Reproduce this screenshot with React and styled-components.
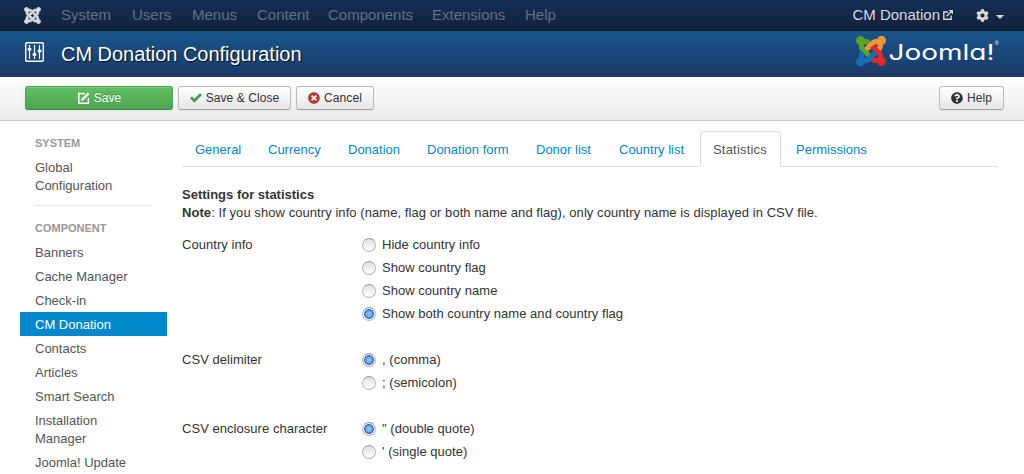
import React, { useState } from "react";
import styled, { createGlobalStyle, css } from "styled-components";
import { FaCog, FaQuestionCircle, FaTimesCircle } from "react-icons/fa";

const GlobalStyle = createGlobalStyle`
  * { box-sizing: border-box; }
  body {
    margin: 0;
    background: #fff;
    color: #333;
    font: 13px/18px "Liberation Sans", Arial, sans-serif;
    overflow: hidden;
  }
  button { font-family: inherit; }
`;

const Page = styled.div`
  height: 474px;
  overflow: hidden;
`;

const NavBar = styled.nav`
  display: flex;
  align-items: center;
  height: 31px;
  padding: 0 20px 0 24px;
  background: linear-gradient(#152e56, #10223e);
  border-bottom: 1px solid #0d1a2c;
  font-size: 15px;
`;

const NavMark = styled.div`
  display: flex;
  width: 37px;
  color: #d9d9d9;
`;

const NavItem = styled.a`
  width: ${(p) => p.$width}px;
  color: #626f84;
  white-space: nowrap;
`;

const NavEnd = styled.div`
  display: flex;
  align-items: center;
  margin-left: auto;
  color: #d9d9d9;
`;

const SiteLink = styled.a`
  display: flex;
  align-items: center;
  gap: 3px;
  margin-right: 23px;
`;

const Caret = styled.span`
  margin: 3px 0 0 7px;
  border: 4px solid transparent;
  border-top-color: #d9d9d9;
  border-bottom: 0;
`;

const Header = styled.header`
  display: flex;
  align-items: center;
  height: 46px;
  padding: 0 20px 0 25px;
  background: linear-gradient(#17568c, #1a3867);
  color: #fff;
`;

const Title = styled.h1`
  margin: 0 auto 0 17px;
  font-size: 20px;
  font-weight: normal;
  line-height: 46px;
  letter-spacing: -0.03px;
  text-shadow: 1px 1px 1px rgba(0, 0, 0, 0.8);
`;

const Toolbar = styled.div`
  display: flex;
  gap: 5px;
  height: 44px;
  padding: 9px 20px 0 25px;
  background: linear-gradient(#fff, #ebebeb);
  border-bottom: 1px solid #ccc;
`;

const Button = styled.button`
  display: flex;
  align-items: center;
  justify-content: center;
  gap: 4px;
  width: ${(p) => p.$width}px;
  height: 24px;
  padding: 0;
  border: 1px solid #bbb;
  border-bottom-color: #a2a2a2;
  border-radius: 3px;
  background: linear-gradient(#fff, #e6e6e6);
  box-shadow: inset 0 1px 0 rgba(255, 255, 255, 0.2), 0 1px 2px rgba(0, 0, 0, 0.05);
  color: #333;
  font-size: 12px;
  letter-spacing: 0.08px;
  ${(p) =>
    p.$primary &&
    css`
      padding-left: 1px;
      border-color: #4da24d;
      border-bottom-color: #3c873c;
      background: linear-gradient(#5fc061, #4fa350);
      color: #fff;
      text-shadow: 0 -1px 0 rgba(0, 0, 0, 0.25);
    `}
  ${(p) => p.$end && "margin-left: auto;"}
`;

const Body = styled.div`
  display: flex;
  padding: 10px 26px 0 20px;
`;

const Sidebar = styled.aside`
  width: 147px;
  margin-right: 15px;
`;

const SideHeading = styled.div`
  padding: 3px 15px;
  color: #999;
  font-size: 11px;
  font-weight: bold;
  text-transform: uppercase;
`;

const SideItem = styled.a`
  display: block;
  padding: 4px 15px 2px;
  color: ${(p) => (p.$active ? "#fff" : "#555")};
  background: ${(p) => (p.$active ? "#08c" : "transparent")};
`;

const SideRule = styled.div`
  height: 1px;
  margin: 8px 15px 10px;
  background: #e5e5e5;
`;

const Main = styled.main`
  flex: 1;
`;

const Tabs = styled.div`
  display: flex;
  height: 36px;
  gap: 2px;
  border-bottom: 1px solid #ddd;
`;

const Tab = styled.button`
  width: ${(p) => p.$width}px;
  height: 36px;
  padding: 0 0 0 12px;
  border: 1px solid transparent;
  border-radius: 4px 4px 0 0;
  background: none;
  color: #08c;
  font-size: 13px;
  text-align: left;
  white-space: nowrap;
  ${(p) =>
    p.$active &&
    css`
      border-color: #ddd;
      border-bottom-color: #fff;
      background: #fff;
      color: #555;
      letter-spacing: 0.2px;
    `}
`;

const Intro = styled.p`
  margin: 19px 0 11px;
  white-space: nowrap;
`;

const Note = styled.span`
  letter-spacing: 0.065px;
`;

const Group = styled.div`
  display: flex;
  margin-bottom: 23px;
`;

const GroupLabel = styled.div`
  width: 180px;
  line-height: 23px;
  letter-spacing: 0.04px;
`;

const Option = styled.label`
  display: flex;
  align-items: center;
  gap: 6px;
  height: 23px;
  letter-spacing: 0.03px;
`;

const Radio = styled.input`
  appearance: none;
  flex: none;
  width: 14px;
  height: 14px;
  margin: 0;
  border: 1px solid #b8bbb5;
  border-top-color: #989b95;
  border-radius: 50%;
  background: linear-gradient(#e0e2de, #fbfbfa 80%);
  &:checked {
    background: radial-gradient(circle at 50% 50%, #9bcafc 0, #65a7f4 3.2px, #2c66ba 4.2px, #2c66ba 4.5px, #eef0ec 5.2px);
  }
`;

const ARMS = [
  ["#5aa426", "M.6 92.1C.6 58.8 27.4 32 60.4 32c30 0 54.5 21.9 59.2 50.2 32.6-7.6 67.1.6 96.5 30l-44.3 44.3c-20.5-20.5-42.6-16.3-55.4-3.5-14.3 14.3-14.3 37.9 0 52.2l99.5 99.5-44 44.3c-87.7-87.2-49.7-49.7-99.8-99.7-26.8-26.5-35-64.8-24.8-98.9C20.4 144.6.6 120.7.6 92.1z"],
  ["#f9943b", "M130.1 208.5l44.3 44.3c10-10 89.7-89.7 99.7-99.8 14.3-14.3 37.6-14.3 51.9 0 12.8 12.8 17 35-3.5 55.4l44 44.3c31.2-31.2 38.5-67.6 28.9-101.2 29.2-4.1 51.9-29.2 51.9-59.5 0-33.2-26.8-60.1-59.8-60.1-30.3 0-55.4 22.5-59.5 51.6-33.8-9.9-71.7-1.5-98.3 25.1-18.3 19.1-71.1 71.5-99.6 99.9z"],
  ["#e22a28", "M396.4 360.7c8.2-32.7-.9-68.5-26.3-93.9-11.8-12.2 5 4.7-99.5-99.7l-44.3 44.3 99.7 99.7c14.3 14.3 14.3 37.6 0 51.9-12.8 12.8-35 17-55.4-3.5l-44 44.3c27.6 30.2 68 38.8 102.7 28 5.5 27.4 29.7 48.1 58.9 48.1 33 0 59.8-26.8 59.8-60.1 0-30.2-22.5-55-51.6-59.1z"],
  ["#1570b5", "M312.1 307.6l-44-44.3c-87 86.4-50.4 50.4-99.7 99.8-14.3 14.3-37.6 14.3-51.9 0-13.1-13.4-16.9-35.3 3.2-55.4l-44-44.3c-30.2 30.2-38 65.2-29.5 98.3-26.7 6-46.2 29.9-46.2 58.2C0 453.2 26.8 480 59.8 480c28.6 0 52.5-19.8 58.6-46.7 32.7 8.2 68.5-.6 94.2-26 32.1-32 12.2-12.4 99.5-99.7z"],
];

const JoomlaMark = ({ size, mono }) => (
  <svg width={size} height={size} viewBox="-8 24 464 464">
    {ARMS.map(([color, d]) => {
      const paint = mono ? "currentColor" : color;
      return <path key={color} d={d} fill={paint} stroke={paint} strokeWidth={16} />;
    })}
  </svg>
);

const Brand = styled.div`
  display: flex;
  align-items: center;
  margin-top: -7px;
`;

const BrandText = styled.text`
  fill: #fff;
  font-family: Inter, "Liberation Sans", sans-serif;
  font-size: 22px;
  font-weight: 400;
  font-feature-settings: "cv11" 1;
`;

const Registered = styled.text`
  fill: #fff;
  font-family: "Liberation Sans", sans-serif;
  font-size: 6px;
`;

const Wordmark = () => (
  <svg width="118" height="40" viewBox="0 0 118 40">
    <BrandText x="2.5" y="29" textLength="106" lengthAdjust="spacingAndGlyphs">Joomla!</BrandText>
    <Registered x="108.5" y="14">®</Registered>
  </svg>
);

const SlidersIcon = () => (
  <svg width="19" height="20" viewBox="0 0 19 20" fill="none" stroke="#fff">
    <rect x="0.75" y="0.75" width="17.5" height="18.5" rx="1" strokeWidth="1.4" />
    <path d="M4.5 3v14M9.5 3v14M14.5 3v14" strokeWidth="1.2" />
    <path d="M2.7 7.2h3.6M7.7 12.5h3.6M12.7 9h3.6" strokeWidth="2.4" />
  </svg>
);

const SlidersHolder = styled.div`
  display: flex;
  margin-top: -4px;
`;

const EditIcon = () => (
  <svg width="12" height="12" viewBox="0 0 12 12" fill="none" stroke="#fff">
    <path d="M7 1.6H.8v9.6h9.6V6" strokeWidth="1.5" />
    <path d="M4.3 7.7L10.6 1.4" strokeWidth="2.4" />
    <path d="M3 9l.6-2.4L5.4 8.4z" fill="#fff" stroke="none" />
  </svg>
);

const CheckIcon = () => (
  <svg width="12" height="10" viewBox="0 0 12 10" fill="none" stroke="#3f9a45" strokeWidth="2.7">
    <path d="M1 4.4l3.3 3.4L11 1.1" />
  </svg>
);

const ExternalIcon = () => (
  <svg width="10" height="10" viewBox="0 0 10 10" fill="none" stroke="currentColor">
    <path d="M5 2H.8v7.3h7.4V5.5" strokeWidth="1.4" />
    <path d="M3.6 6.3L8.4 1.5" strokeWidth="1.5" />
    <path d="M5.6 0H10v4.3z" fill="currentColor" stroke="none" />
  </svg>
);

const MENU = [
  ["System", 71],
  ["Users", 60],
  ["Menus", 65],
  ["Content", 71],
  ["Components", 104],
  ["Extensions", 93],
  ["Help", 40],
];

const TABS = [
  ["General", 71],
  ["Currency", 78],
  ["Donation", 77],
  ["Donation form", 107],
  ["Donor list", 81],
  ["Country list", 92],
  ["Statistics", 81],
  ["Permissions", 98],
];

const COMPONENTS = [
  "Banners",
  "Cache Manager",
  "Check-in",
  "CM Donation",
  "Contacts",
  "Articles",
  "Smart Search",
  "Installation Manager",
  "Joomla! Update",
];

const FIELDS = [
  {
    label: "Country info",
    options: ["Hide country info", "Show country flag", "Show country name", "Show both country name and country flag"],
    value: 3,
  },
  { label: "CSV delimiter", options: [", (comma)", "; (semicolon)"], value: 0 },
  { label: "CSV enclosure character", options: ['" (double quote)', "' (single quote)"], value: 0 },
];

function RadioField({ label, options, value }) {
  const [selected, setSelected] = useState(value);
  return (
    <Group>
      <GroupLabel>{label}</GroupLabel>
      <div>
        {options.map((option, i) => (
          <Option key={option}>
            <Radio type="radio" name={label} checked={selected === i} onChange={() => setSelected(i)} />
            {option}
          </Option>
        ))}
      </div>
    </Group>
  );
}

export default function App() {
  const [tab, setTab] = useState("Statistics");
  return (
    <Page>
      <GlobalStyle />
      <NavBar>
        <NavMark>
          <JoomlaMark size={17} mono />
        </NavMark>
        {MENU.map(([name, width]) => (
          <NavItem key={name} $width={width}>
            {name}
          </NavItem>
        ))}
        <NavEnd>
          <SiteLink>
            CM Donation <ExternalIcon />
          </SiteLink>
          <FaCog size={13} />
          <Caret />
        </NavEnd>
      </NavBar>
      <Header>
        <SlidersHolder>
          <SlidersIcon />
        </SlidersHolder>
        <Title>CM Donation Configuration</Title>
        <Brand>
          <JoomlaMark size={30} />
          <Wordmark />
        </Brand>
      </Header>
      <Toolbar>
        <Button $primary $width={148}>
          <EditIcon /> Save
        </Button>
        <Button $width={113}>
          <CheckIcon /> Save &amp; Close
        </Button>
        <Button $width={78}>
          <FaTimesCircle size={12} color="#bd362f" /> Cancel
        </Button>
        <Button $width={65} $end>
          <FaQuestionCircle size={12} /> Help
        </Button>
      </Toolbar>
      <Body>
        <Sidebar>
          <SideHeading>System</SideHeading>
          <SideItem>Global Configuration</SideItem>
          <SideRule />
          <SideHeading>Component</SideHeading>
          {COMPONENTS.map((name) => (
            <SideItem key={name} $active={name === "CM Donation"}>
              {name}
            </SideItem>
          ))}
        </Sidebar>
        <Main>
          <Tabs>
            {TABS.map(([name, width]) => (
              <Tab key={name} $width={width} $active={tab === name} onClick={() => setTab(name)}>
                {name}
              </Tab>
            ))}
          </Tabs>
          <Intro>
            <b>Settings for statistics</b>
            <br />
            <Note>
              <b>Note</b>: If you show country info (name, flag or both name and flag), only country name is displayed in CSV file.
            </Note>
          </Intro>
          {FIELDS.map((field) => (
            <RadioField key={field.label} {...field} />
          ))}
        </Main>
      </Body>
    </Page>
  );
}
